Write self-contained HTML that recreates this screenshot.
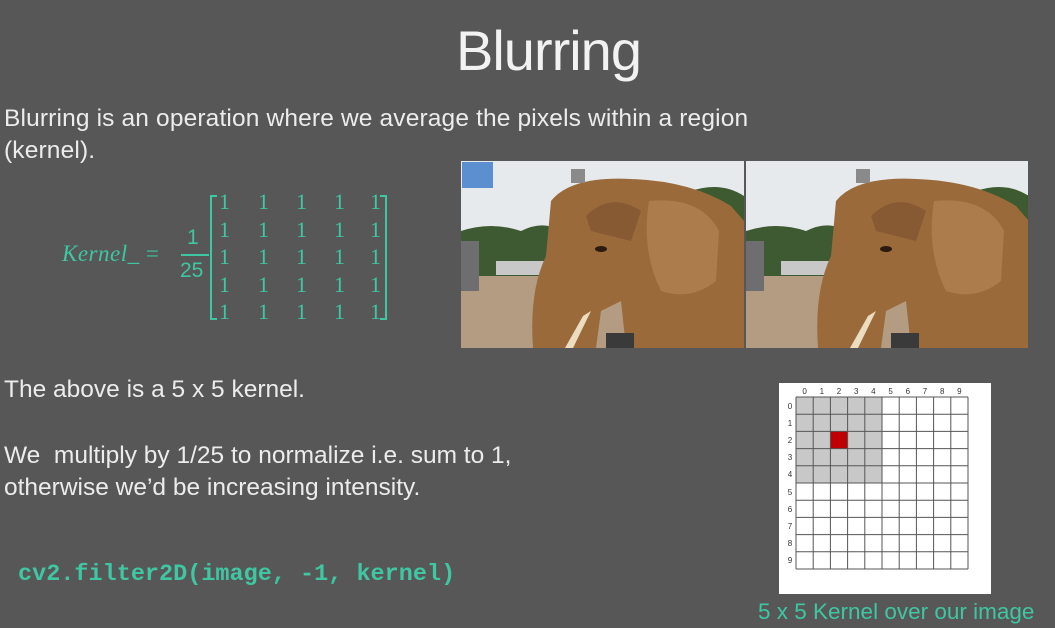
<!DOCTYPE html>
<html><head><meta charset="utf-8"><style>
body{margin:0;width:1055px;height:628px;background:#575757;overflow:hidden;position:relative;font-family:"Liberation Sans",sans-serif;color:#ececec}
.t{position:absolute;white-space:nowrap}
</style></head><body>
<div class="t" style="left:456px;top:18px;font-size:56px;color:#f2f2f2;letter-spacing:-1px">Blurring</div>
<div class="t" style="left:4px;top:103px;font-size:24.5px;line-height:32px;letter-spacing:0.15px">Blurring is an operation where we average the pixels within a region<br>(kernel).</div>
<div class="t" style="left:62px;top:241px;font-size:23px;color:#3fc6a2;font-family:'Liberation Serif',serif;font-style:italic;letter-spacing:0.5px">Kernel_ <span style="font-style:normal">=</span></div>
<div class="t" style="left:187px;top:226px;font-size:21px;color:#3fc6a2">1</div>
<div style="position:absolute;left:181px;top:254px;width:28px;height:2px;background:#3fc6a2"></div>
<div class="t" style="left:180px;top:259px;font-size:21px;color:#3fc6a2">25</div>
<svg style="position:absolute;left:208px;top:192px" width="185" height="130">
<path d="M9 4H3V127H9M172 4H178V127H172" fill="none" stroke="#3fc6a2" stroke-width="2"/>
<g fill="#3fc6a2" font-family="Liberation Serif,serif" font-size="22">
<text x="11" y="17">1</text><text x="50" y="17">1</text><text x="88" y="17">1</text><text x="126" y="17">1</text><text x="162" y="17">1</text>
<text x="11" y="45">1</text><text x="50" y="45">1</text><text x="88" y="45">1</text><text x="126" y="45">1</text><text x="162" y="45">1</text>
<text x="11" y="72">1</text><text x="50" y="72">1</text><text x="88" y="72">1</text><text x="126" y="72">1</text><text x="162" y="72">1</text>
<text x="11" y="100">1</text><text x="50" y="100">1</text><text x="88" y="100">1</text><text x="126" y="100">1</text><text x="162" y="100">1</text>
<text x="11" y="127">1</text><text x="50" y="127">1</text><text x="88" y="127">1</text><text x="126" y="127">1</text><text x="162" y="127">1</text>
</g></svg>
<svg style="position:absolute;left:461px;top:161px" width="567" height="188">
<defs><g id="ph">
<rect width="283" height="187" fill="#e6eaec"/>
<path d="M0 70 Q30 60 60 70 Q90 55 110 80 L110 120 L0 125Z" fill="#3e5a32"/>
<path d="M230 30 Q260 20 283 35 L283 120 L230 120Z" fill="#3d5a30"/>
<rect x="0" y="115" width="283" height="72" fill="#b39c82"/>
<rect x="0" y="80" width="18" height="50" fill="#6e6e70"/>
<rect x="35" y="100" width="50" height="14" fill="#c8c8c8"/>
<path d="M90 40 Q110 15 170 18 Q230 20 270 45 L283 60 L283 187 L165 187 L160 140 L140 150 L135 187 L72 187 Q68 130 85 95Z" fill="#9b6a3b"/>
<path d="M188 40 Q240 35 258 70 L255 120 Q230 140 200 130 Q180 90 188 40Z" fill="#ad7c4c"/>
<path d="M125 55 Q150 30 180 50 L170 80 L130 70Z" fill="#7a5030" opacity=".6"/>
<ellipse cx="140" cy="88" rx="6" ry="3" fill="#2b1a10"/>
<path d="M122 155 L130 150 L112 187 L104 187Z" fill="#ecdcc0"/>
<rect x="110" y="8" width="14" height="14" fill="#8a8a8a"/>
<rect x="145" y="172" width="28" height="15" fill="#3a3a3a"/>
</g></defs>
<use href="#ph"/><use href="#ph" x="285"/>
<rect x="283" y="0" width="2" height="188" fill="#575757"/>
<rect x="1" y="1" width="31" height="26" fill="#5b8fd0"/>
</svg>
<div class="t" style="left:4px;top:376px;font-size:24.5px">The above is a 5 x 5 kernel.</div>
<div class="t" style="left:4px;top:440px;font-size:24.5px;line-height:32px">We&nbsp; multiply by 1/25 to normalize i.e. sum to 1,<br>otherwise we’d be increasing intensity.</div>
<div class="t" style="left:18px;top:561px;font-size:23.5px;font-weight:bold;color:#3fc6a2;font-family:'Liberation Mono',monospace">cv2.filter2D(image, -1, kernel)</div>
<svg style="position:absolute;left:779px;top:383px" width="212" height="211">
<rect width="212" height="211" fill="#fff"/>
<rect x="17" y="14" width="86" height="86" fill="#c8c8c8"/>
<rect x="51.4" y="48.4" width="17.2" height="17.2" fill="#c00000"/>
<g stroke="#555" stroke-width="1">
<path d="M17 14V186M34.2 14V186M51.4 14V186M68.6 14V186M85.8 14V186M103 14V186M120.2 14V186M137.4 14V186M154.6 14V186M171.8 14V186M189 14V186"/>
<path d="M17 14H189M17 31.2H189M17 48.4H189M17 65.6H189M17 82.8H189M17 100H189M17 117.2H189M17 134.4H189M17 151.6H189M17 168.8H189M17 186H189"/>
</g>
<g font-size="8" fill="#333" text-anchor="middle">
<text x="25.6" y="11">0</text><text x="42.8" y="11">1</text><text x="60" y="11">2</text><text x="77.2" y="11">3</text><text x="94.4" y="11">4</text><text x="111.6" y="11">5</text><text x="128.8" y="11">6</text><text x="146" y="11">7</text><text x="163.2" y="11">8</text><text x="180.4" y="11">9</text>
<text x="11" y="26">0</text><text x="11" y="43">1</text><text x="11" y="60">2</text><text x="11" y="77">3</text><text x="11" y="94">4</text><text x="11" y="112">5</text><text x="11" y="129">6</text><text x="11" y="146">7</text><text x="11" y="163">8</text><text x="11" y="180">9</text>
</g></svg>
<div class="t" style="left:758px;top:599px;font-size:22.5px;color:#3fc6a2">5 x 5 Kernel over our image</div>
</body></html>
